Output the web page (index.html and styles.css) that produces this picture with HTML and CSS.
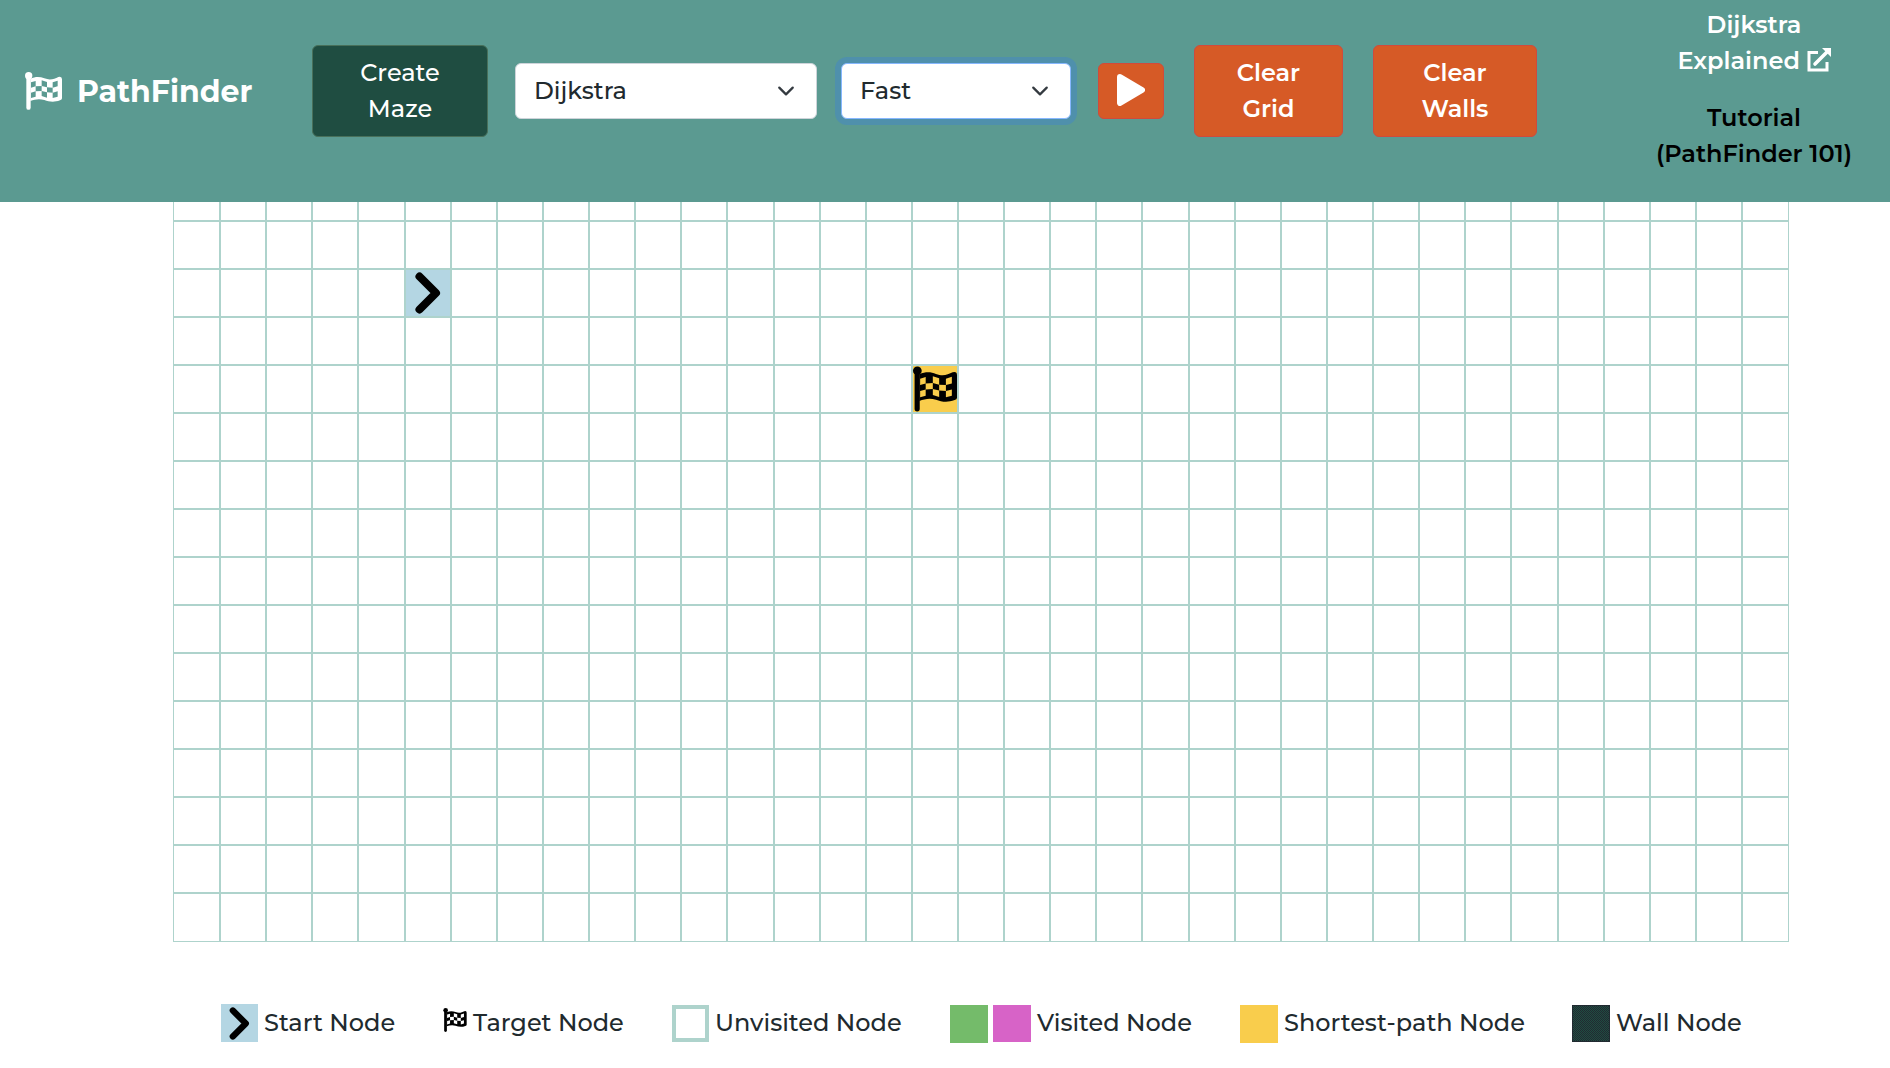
FILE: index.html
```html
<!DOCTYPE html>
<html lang="en">

<head>
  <meta charset="UTF-8" />
  <title>PathFinder</title>
  <link rel="stylesheet" href="styles.css">
</head>

<body>
  <!-- Shared icons -->
  <svg class="sprite" aria-hidden="true">
    <symbol id="flag" viewBox="0 0 111 114">
      <circle cx="11" cy="11" r="11" />
      <path d="M4 11H17V107a6.5 6.5 0 0 1-13 0Z" />
      <path fill-rule="evenodd" d="M16 20C32 13 45 14 58 19C75 26 88 21 100 15Q111 12 111 22V79Q111 83 105 85C86 92 72 89 58 84C42 79 30 82 16 87ZM18 31V47L32 43V27ZM50 25V42L66 46V30ZM83 31V47L98 43V26ZM32 43V58L50 57V42ZM66 46V61L83 62V47ZM18 62V78L32 74V58ZM50 57V72L66 77V61ZM83 62V78L98 74V58Z" />
    </symbol>
    <symbol id="chevron" viewBox="0 0 26 42">
      <path d="M4.5 4.5L21 21L4.5 37.5" fill="none" stroke="currentColor" stroke-width="8" stroke-linecap="round" stroke-linejoin="round" />
    </symbol>
  </svg>

  <header class="navbar">
    <div class="brand">
      <svg class="brand-icon"><use href="#flag" /></svg>
      <span>PathFinder</span>
    </div>

    <button class="btn btn-maze">Create<br>Maze</button>

    <select class="form-select algorithm" id="algorithm">
      <option>Dijkstra</option>
    </select>

    <select class="form-select speed" id="speed">
      <option>Fast</option>
    </select>

    <button class="btn btn-play" aria-label="Play">
      <svg width="28" height="32" viewBox="0 0 28 32">
        <path d="M3 3L25 16L3 29Z" fill="#fff" stroke="#fff" stroke-width="6" stroke-linejoin="round" />
      </svg>
    </button>
    <button class="btn btn-grid">Clear<br>Grid</button>
    <button class="btn btn-walls">Clear<br>Walls</button>

    <nav class="links">
      <a class="explained">Dijkstra<br>Explained
        <svg class="external" viewBox="0 0 24 24">
          <path d="M11 4.5H2V22H20V14" fill="none" stroke="#fff" stroke-width="3" />
          <path d="M8 16L20 4" stroke="#fff" stroke-width="3.6" stroke-linecap="round" />
          <path d="M15 0H24V9Z" fill="#fff" />
        </svg>
      </a>
      <a class="tutorial">Tutorial<br>(PathFinder 101)</a>
    </nav>
  </header>

  <main class="grid" id="grid"></main>

  <!-- Legend -->
  <footer class="legend">
    <div class="item item-start">
      <span class="swatch start"><svg><use href="#chevron" /></svg></span>
      <span class="label">Start Node</span>
    </div>
    <div class="item item-target">
      <svg class="target-icon"><use href="#flag" /></svg>
      <span class="label">Target Node</span>
    </div>
    <div class="item item-unvisited">
      <span class="swatch unvisited"></span>
      <span class="label">Unvisited Node</span>
    </div>
    <div class="item item-visited">
      <span class="swatch visited"></span>
      <span class="swatch visited-alt"></span>
      <span class="label">Visited Node</span>
    </div>
    <div class="item item-path">
      <span class="swatch path"></span>
      <span class="label">Shortest-path Node</span>
    </div>
    <div class="item item-wall">
      <span class="swatch wall"></span>
      <span class="label">Wall Node</span>
    </div>
  </footer>

  <script>
    const ROWS = 16;
    const COLS = 35;
    const start = { row: 2, col: 5 };
    const target = { row: 4, col: 16 };

    const grid = document.getElementById("grid");

    for (let row = 0; row < ROWS; row++) {
      for (let col = 0; col < COLS; col++) {
        const node = document.createElement("div");
        node.className = "node";
        if (row === start.row && col === start.col) {
          node.classList.add("node-start");
          node.innerHTML = '<svg><use href="#chevron" /></svg>';
        }
        if (row === target.row && col === target.col) {
          node.classList.add("node-target");
          node.innerHTML = '<svg><use href="#flag" /></svg>';
        }
        grid.appendChild(node);
      }
    }
  </script>
</body>

</html>
```
FILE: styles.css
```css
:root {
  --teal: #5b9a91;
  --line: #aed3cc;
  --orange: #d65a26;
  --text: #212a2e;
}

* {
  box-sizing: border-box;
}

body {
  margin: 0;
  font-family: Montserrat, Inter, sans-serif;
  font-size: 24px;
  font-weight: 500;
  line-height: 36px;
  color: var(--text);
  background: white;
  height: 1068px;
  overflow: hidden;
}

.sprite {
  display: none;
}

/* Header */
.navbar {
  display: flex;
  align-items: center;
  height: 202px;
  padding: 0 0 20px 25px;
  background: var(--teal);
}

.brand {
  display: flex;
  align-items: center;
  gap: 15px;
  width: 287px;
  color: white;
  font-size: 30px;
  font-weight: 700;
}

.brand span {
  padding-top: 1px;
}

.brand-icon {
  width: 37px;
  height: 38px;
  fill: white;
}

.btn {
  height: 92px;
  padding: 0;
  border: 1px solid #d14a3c;
  border-radius: 6px;
  background: var(--orange);
  color: white;
  font: inherit;
  font-weight: 600;
}

.btn-maze {
  width: 176px;
  margin-right: 27px;
  background: #1f4d41;
  border-color: #48705a;
  font-weight: 500;
}

.form-select {
  appearance: none;
  height: 56px;
  padding: 0 18px;
  border: 1px solid #ced4da;
  border-radius: 6px;
  background: white url("data:image/svg+xml,%3csvg xmlns='http://www.w3.org/2000/svg' viewBox='0 0 16 16'%3e%3cpath fill='none' stroke='%23343a40' stroke-linecap='round' stroke-linejoin='round' stroke-width='2' d='M2 5l6 6 6-6'/%3e%3c/svg%3e") no-repeat right 18px center / 24px 18px;
  color: var(--text);
  font: inherit;
}

.algorithm {
  width: 302px;
  margin-right: 24px;
}

.speed {
  width: 230px;
  margin-right: 27px;
  border-color: #86b7fe;
  box-shadow: 0 0 0 6px #4f90ac;
}

.btn-play {
  display: flex;
  align-items: center;
  justify-content: center;
  width: 66px;
  height: 56px;
  margin-right: 30px;
  padding-bottom: 2px;
}

.btn-grid {
  width: 149px;
  margin-right: 30px;
}

.btn-walls {
  width: 164px;
}

.links {
  display: flex;
  flex-direction: column;
  gap: 21px;
  width: 200px;
  margin: 0 0 4px 117px;
  text-align: center;
  font-weight: 600;
  white-space: nowrap;
}

.explained {
  color: white;
}

.tutorial {
  color: black;
}

.external {
  width: 24px;
  height: 24px;
  vertical-align: -3px;
}

/* Board */
.grid {
  display: grid;
  grid-template-columns: 47.1px repeat(33, 1fr) 46.95px;
  grid-template-rows: 19px repeat(14, 48px) 49px;
  width: 1616px;
  margin-left: 173px;
}

.node {
  display: flex;
  align-items: center;
  justify-content: center;
  min-width: 0;
  border: 1px solid var(--line);
}

.node:nth-child(-n + 35) {
  border-top: none;
}

.node svg {
  flex: none;
}

.node-start {
  background: #b4d6e3;
}

.node-start svg {
  width: 26px;
  height: 42px;
  color: black;
}

.node-target {
  background: #f9cd4c;
}

.node-target svg {
  width: 44px;
  height: 46px;
  fill: black;
}

/* Legend */
.legend {
  display: flex;
  align-items: flex-start;
  margin: 62px 0 0 221px;
  height: 39px;
  white-space: nowrap;
}

.item {
  display: flex;
  align-items: flex-start;
  padding-top: 1px;
}

.item-start {
  width: 222px;
  padding-top: 0;
}

.item-start .label {
  padding-top: 1px;
}

.item-target { width: 229px; }
.item-unvisited { width: 278px; }
.item-visited { width: 290px; }
.item-path { width: 332px; }

.swatch {
  width: 38px;
  height: 38px;
  margin-right: 6px;
}

.start {
  display: flex;
  align-items: center;
  justify-content: center;
  width: 37px;
  background: #b4d6e3;
}

.start svg {
  width: 21px;
  height: 33px;
  color: black;
}

.target-icon {
  width: 24px;
  height: 24px;
  margin: 3px 6px 0 0;
}

.unvisited {
  width: 37px;
  height: 37px;
  border: 4px solid var(--line);
}

.visited {
  margin-right: 5px;
  background: #74bb6a;
}

.visited-alt {
  height: 37px;
  background: #d763c7;
}

.path {
  background: #f9cd4c;
}

.wall {
  height: 37px;
  border: 1px solid #212a31;
  background: repeating-conic-gradient(#212a31 0 25%, #1f4d41 0 50%) 0 0 / 2px 2px;
}
```
